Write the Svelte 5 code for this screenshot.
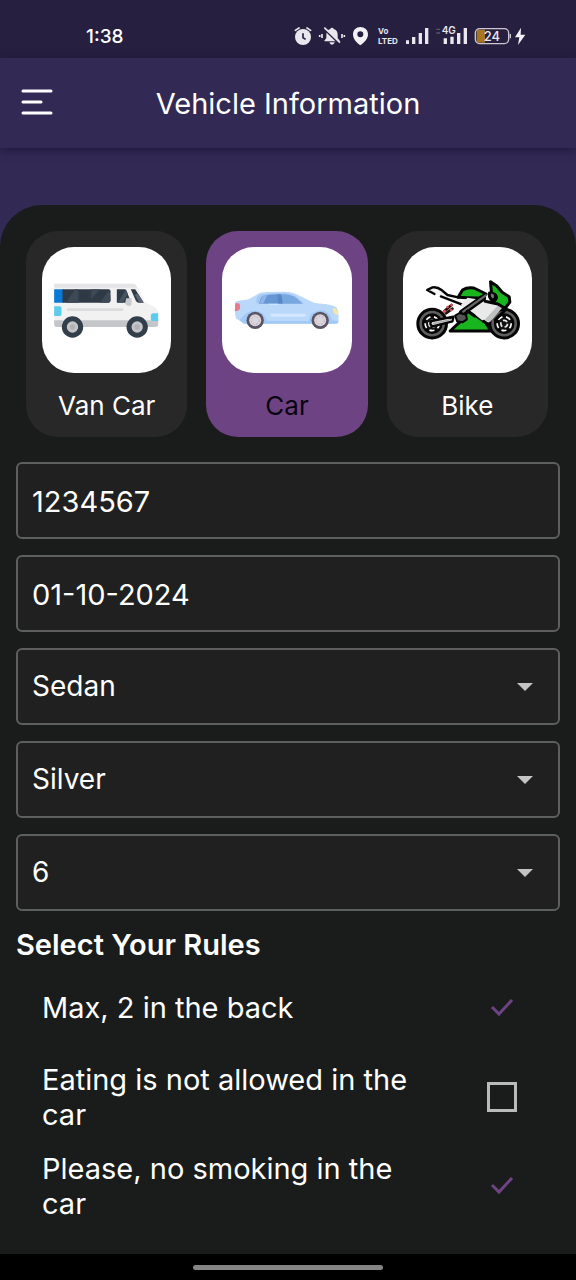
<script>
  let selected = $state('car');
  let plate = $state('1234567');
  let date = $state('01-10-2024');

  const dropdowns = [
    { id: 'model', label: 'Model', value: 'Sedan' },
    { id: 'color', label: 'Color', value: 'Silver' },
    { id: 'seats', label: 'Seats', value: '6' }
  ];

  let rules = $state([
    { id: 'back', text: 'Max, 2 in the back', on: true },
    { id: 'eating', text: 'Eating is not allowed in the car', on: false },
    { id: 'smoking', text: 'Please, no smoking in the car', on: true }
  ]);
</script>

{#snippet van()}
  <svg viewBox="67 68 387 378" aria-hidden="true">
    <path d="M104 178H338Q348 178 352 187L376 234L403 247Q415 254 415 270V300Q415 308 406 308H112Q103 308 103 298V180Z" fill="#f1f1f2" />
    <path d="M104 178H338Q348 178 352 190H103Z" fill="#e4e4e6" />
    <path d="M103 288H415V300Q415 308 406 308H112Q103 308 103 298Z" fill="#c5c6c9" />
    <path d="M103 195H131V235H103Z" fill="#0879d4" />
    <path d="M128 195H266Q272 195 272 201V229Q272 235 266 235H128Z" fill="#2f3a46" />
    <path d="M138 235L166 195H176V235ZM214 195H240L214 225ZM240 235L267 199Q272 208 272 229L266 235Z" fill="#3d4956" />
    <path d="M291 195H313Q318 195 320 199L334 235H291Z" fill="#303b48" />
    <path d="M294 235L318 196L324 209L309 235Z" fill="#465361" />
    <path d="M333 195H346L372 235H357Q351 235 348 229Z" fill="#303b48" />
    <path d="M345 211L354 207L371 235H359Z" fill="#5b6672" />
    <path d="M319 222H335V239Q335 245 328 245Q316 243 316 236Z" fill="#c9cacd" />
    <rect x="141" y="252" width="170" height="8" rx="4" fill="#dcdcde" />
    <path d="M103 246H120Q125 246 125 251V270Q125 275 120 275H103Z" fill="#5bcce9" />
    <path d="M415 267H400Q393 267 393 274V285Q393 290 399 290H415Z" fill="#5bcce9" />
    <path d="M126 308Q126 277 158 277Q189 277 189 308Z" fill="#e2e3e5" />
    {#each [158, 352] as x}
      <circle cx={x} cy="308" r="32" fill="#323e4a" />
      <circle cx={x} cy="308" r="17" fill="#c4c5c8" />
      <circle cx={x} cy="308" r="8" fill="#b1b2b6" />
    {/each}
  </svg>
{/snippet}

{#snippet car()}
  <svg viewBox="67 67 387 378" aria-hidden="true">
    <path d="M106 235Q106 230 113 229L147 224L175 207Q183 203 205 202L254 201Q280 202 296 212L344 235Q394 238 409 248Q416 254 416 275V290Q416 297 407 297H133Q120 286 109 282Q104 273 106 235Z" fill="#b9d8fa" />
    <path d="M174 213Q190 205 240 205Q276 205 292 218L311 236H170Q167 227 174 213Z" fill="#a3c8f3" />
    <path d="M188 214Q210 208 240 209V237H177Q181 222 188 214Z" fill="#6697d4" />
    <path d="M246 209Q272 208 289 220L309 237H248Z" fill="#78a6df" />
    <path d="M189 214L203 210L190 237H178Z" fill="#8db5e9" />
    <path d="M234 209H245L249 237H234Z" fill="#5688c5" />
    <path d="M129 275Q143 258 166 258Q188 259 196 278L202 289H327Q329 261 361 257Q388 257 396 286L415 290V294L408 297H133L119 287Z" fill="#a2c9f5" />
    <path d="M214 267H312Q319 267 319 272Q319 276 312 276H219Q211 274 211 270Z" fill="#d3e8ff" />
    <path d="M106 236H117Q121 238 121 247Q121 258 111 259H105Z" fill="#e9798d" />
    <path d="M398 252L407 251Q415 257 415 272Q401 269 398 252Z" fill="#f5e9a6" />
    <path d="M204 237H238L234 241H210Z" fill="#cfe5ff" />
    {#each [166, 361] as x}
      <circle cx={x} cy="287" r="26" fill="#585462" />
      <circle cx={x} cy="287" r="18" fill="#ddd6dc" />
      <circle cx={x} cy="287" r="12" fill="none" stroke="#c6bdc8" stroke-width="4" stroke-dasharray="6 4" />
    {/each}
  </svg>
{/snippet}

{#snippet bike()}
  <svg viewBox="66 67 387 378" aria-hidden="true" stroke-linecap="round" stroke-linejoin="round">
    <g stroke="#050505" stroke-width="9">
      {#each [153, 369] as x}
        <circle cx={x} cy="297" r="43" fill="#5f5f5f" stroke-width="9" />
        <circle cx={x} cy="297" r="26" fill="#111" stroke-width="10" />
        <circle cx={x} cy="297" r="21" fill="none" stroke="#fff" stroke-width="5" stroke-dasharray="15 11" stroke-linecap="butt" />
        <circle cx={x} cy="297" r="10" fill="none" stroke="#eee" stroke-width="5" stroke-dasharray="14 7" stroke-linecap="butt" />
      {/each}
      <path d="M138 196L154 188Q169 186 181 196L199 211L231 218L264 219L249 241L179 215L160 206Z" fill="#f5f5f5" stroke="none" />
      <path d="M138 196L154 188Q169 186 181 196L199 211L231 218M138 196L160 208M179 215L249 242" fill="none" stroke-width="7" />
      <path d="M231 218L244 196Q258 187 278 190L315 208L294 220L259 219Z" fill="#18b51e" />
      <path d="M259 219L239 241L259 257L296 225Z" fill="#ececec" stroke="none" />
      <path d="M207 319L238 290L261 258L313 293L329 319Z" fill="#18b51e" />
      <path d="M264 256L300 227L348 238L365 245L326 292L310 293Z" fill="#e9e9e9" stroke="none" />
      <path d="M310 286L349 244L365 247L326 292Z" fill="#bfc0c1" stroke="none" />
      <path d="M328 171L347 184L363 203L384 216L386 232L372 251L350 238L312 230Q340 237 346 219Q345 209 331 205Z" fill="#18b51e" />
      <path d="M325 205Q322 221 335 227Q346 222 342 211" fill="#777" />
      <path d="M243 264L305 220" fill="none" stroke-width="19" />
      <path d="M246 261L314 212" fill="none" stroke="#666" stroke-width="7" />
      <path d="M374 254L342 286M259 259L280 274M307 290L325 302" fill="none" />
      <path d="M151 289L217 276L214 290L154 305Q143 299 151 289Z" fill="#ddd" stroke-width="7" />
      <path d="M157 297L211 284" stroke="#aaa" stroke-width="4" />
      <path d="M222 273L235 265L255 270L257 284L244 293L228 290Z" fill="#555" stroke-width="6" />
      <path d="M189 260L211 241M194 266L214 252" fill="none" stroke="#241010" stroke-width="8" />
    </g>
    <g fill="#d95754">
      <circle cx="190" cy="260" r="5" />
      <circle cx="199" cy="247" r="4" />
      <circle cx="211" cy="241" r="4" />
      <circle cx="210" cy="256" r="4" />
    </g>
  </svg>
{/snippet}

<div class="screen">
  <div class="status">
    <time>1:38</time>
    <div class="indicators">
      <svg width="18" height="20" viewBox="42 33 54 60" aria-hidden="true">
        <circle cx="69" cy="66" r="24" fill="#e9e6ee" />
        <path d="M69 55V68L77 73" fill="none" stroke="#261f3f" stroke-width="5" />
        <path d="M46 46L57 39M92 46L81 39" stroke="#e9e6ee" stroke-width="5" stroke-linecap="round" />
      </svg>
      <svg width="28" height="20" viewBox="114 33 84 60" aria-hidden="true">
        <path d="M156 38Q160 38 161 42Q173 46 173 59V69L179 77V79H133V77L139 69V59Q139 46 151 42Q152 38 156 38ZM148 82H164Q162 89 156 89Q150 89 148 82Z" fill="#e9e6ee" />
        <path d="M130 39L181 88" stroke="#261f3f" stroke-width="7" />
        <path d="M133 38L180 83M126 57V69M119 60V66M186 57V69M193 60V66" stroke="#e9e6ee" stroke-width="5" />
      </svg>
      <svg width="16" height="20" viewBox="216 33 48 60" aria-hidden="true">
        <path fill-rule="evenodd" d="M241 36C254 36 264 45 264 58C264 72 253 83 241 91C229 83 219 72 219 58C219 45 229 36 241 36ZM241 49A9 9 0 1 0 241 67A9 9 0 1 0 241 49Z" fill="#f3f1f5" />
      </svg>
      <div class="volte"><span>Vo</span><span>LTED</span></div>
      <svg width="24" height="20" viewBox="378 33 72 60" aria-hidden="true">
        <path d="M378 76H387V87H378ZM396 66H406V87H396ZM416 54H426V87H416ZM435 39H445V87H435Z" fill="#e9e6ee" />
      </svg>
      <svg width="32" height="20" viewBox="468 33 96 60" aria-hidden="true">
        <path d="M491 70H501V87H491ZM511 65H521V87H511ZM531 54H541V87H531ZM551 39H561V87H551Z" fill="#e9e6ee" />
        <path d="M469 43H480M469 54H480" stroke="#5d566f" stroke-width="4" />
        <text x="485" y="58" font-size="30" font-weight="600" fill="#e9e6ee">4G</text>
      </svg>
      <svg width="54" height="20" viewBox="582 33 162 60" aria-hidden="true">
        <path d="M590 44H615V83H590Z" fill="#a87520" />
        <rect x="586" y="41" width="100" height="45" rx="13" fill="none" stroke="#cbc7d2" stroke-width="4" />
        <path d="M691 57V70" stroke="#cbc7d2" stroke-width="4" />
        <text x="611" y="78" font-size="39" font-weight="500" fill="#e9e6ee">24</text>
        <path d="M723 38L705 67H718L714 90L736 59H722Z" fill="#f3f1f5" />
      </svg>
    </div>
  </div>

  <header>
    <button class="menu" aria-label="Menu">
      <svg width="34" height="28" viewBox="0 0 34 28" fill="none" stroke="#fff" stroke-width="3" stroke-linecap="round" aria-hidden="true">
        <path d="M3 2H31M3 13H21M3 24H31" />
      </svg>
    </button>
    <h1>Vehicle Information</h1>
  </header>

  <main>
    <div class="types">
      {#each [['van', 'Van Car', van], ['car', 'Car', car], ['bike', 'Bike', bike]] as [id, name, picture]}
        <button class="type" class:active={selected === id} aria-pressed={selected === id} onclick={() => (selected = id)}>
          <span class="tile">{@render picture()}</span>
          <span>{name}</span>
        </button>
      {/each}
    </div>

    <div class="fields">
      <input class="field" type="text" aria-label="Plate number" bind:value={plate} />
      <input class="field" type="text" aria-label="Registration date" bind:value={date} />
      {#each dropdowns as d}
        <div class="select">
          <select class="field" id={d.id} aria-label={d.label}>
            <option>{d.value}</option>
          </select>
          <svg width="16" height="8" viewBox="0 0 16 8" aria-hidden="true"><path d="M0 0H16L8 8Z" fill="#c4c4c4" /></svg>
        </div>
      {/each}
    </div>

    <h2>Select Your Rules</h2>
    <div class="rules">
      {#each rules as rule}
        <div class="rule">
          <label for={rule.id}>{rule.text}</label>
          <span class="check">
            <input type="checkbox" id={rule.id} bind:checked={rule.on} />
            {#if rule.on}
              <svg width="24" height="20" viewBox="0 0 24 20" aria-hidden="true">
                <path d="M2 9L9 16L22 2" fill="none" stroke="#6e4383" stroke-width="3" />
              </svg>
            {/if}
          </span>
        </div>
      {/each}
    </div>
  </main>

  <footer><span></span></footer>
</div>

<style>
  :global(body) {
    margin: 0;
    background: #322a55;
  }
  .screen {
    display: flex;
    flex-direction: column;
    min-height: 100vh;
    background: #322a55;
    color: #fff;
    font-family: Inter, sans-serif;
    font-size: 29px;
  }
  .screen * {
    box-sizing: border-box;
  }
  button,
  input,
  select {
    font: inherit;
    color: inherit;
    margin: 0;
  }
  .status {
    display: flex;
    align-items: center;
    justify-content: space-between;
    height: 58px;
    padding: 14px 48px 0 86px;
    background: #261f3f;
  }
  time {
    font-size: 19px;
    font-weight: 500;
  }
  .indicators {
    display: flex;
    align-items: center;
    gap: 6px;
  }
  .volte {
    display: flex;
    flex-direction: column;
    width: 26px;
    padding-left: 4px;
    font-size: 8px;
    font-weight: 700;
    line-height: 10px;
    color: #e9e6ee;
  }
  header {
    display: grid;
    grid-template-columns: 34px 1fr 34px;
    align-items: center;
    height: 90px;
    padding: 0 20px;
    box-shadow: 0 2px 8px #1d173a;
  }
  h1 {
    margin: 0;
    font-size: 29px;
    font-weight: 400;
    text-align: center;
  }
  .menu {
    display: grid;
    padding: 0;
    border: 0;
    background: none;
  }
  main {
    flex: 1;
    margin-top: 57px;
    padding: 26px 16px 22px;
    border-radius: 42px 42px 0 0;
    background: #1a1c1b;
  }
  .types {
    display: grid;
    grid-template-columns: repeat(3, 1fr);
    gap: 19px;
    padding: 0 12px 0 10px;
  }
  .type {
    display: flex;
    flex-direction: column;
    gap: 17px;
    height: 206px;
    padding: 16px;
    border: 0;
    border-radius: 32px;
    background: #282828;
    font-size: 26px;
    line-height: 32px;
    text-align: center;
  }
  .type > span {
    width: 100%;
  }
  .active {
    background: #6e4383;
    color: #080310;
  }
  .tile {
    flex: none;
    height: 126px;
    border-radius: 32px;
    overflow: hidden;
    background: #fff;
  }
  .tile svg {
    display: block;
    width: 100%;
    height: 100%;
  }
  .fields {
    display: grid;
    gap: 16px;
    margin-top: 25px;
  }
  .field {
    width: 100%;
    height: 77px;
    padding: 2px 14px 0;
    border: 2px solid #5d5e5e;
    border-radius: 6px;
    background: #202020;
    appearance: none;
  }
  .select {
    display: grid;
    align-items: center;
  }
  .select > * {
    grid-area: 1 / 1;
  }
  .select svg {
    justify-self: end;
    margin-right: 27px;
    pointer-events: none;
  }
  select.field {
    padding: 0 14px 2px;
    font-size: 28px;
  }
  h2 {
    margin: 16px 0 1px;
    font-size: 29px;
    font-weight: 600;
    line-height: 35px;
  }
  .rule {
    display: flex;
    align-items: center;
    justify-content: space-between;
    min-height: 89px;
    padding: 0 43px 0 26px;
    line-height: 35px;
  }
  label {
    max-width: 390px;
  }
  .check {
    display: grid;
    place-items: center;
  }
  .check > * {
    grid-area: 1 / 1;
  }
  .check input {
    width: 30px;
    height: 30px;
    border: 3px solid #b9bbba;
    appearance: none;
  }
  .check input:checked {
    border-color: transparent;
  }
  .check svg {
    pointer-events: none;
  }
  footer {
    display: grid;
    place-items: center;
    height: 26px;
    background: #000;
  }
  footer span {
    width: 33%;
    height: 5px;
    border-radius: 3px;
    background: #858585;
  }
</style>
